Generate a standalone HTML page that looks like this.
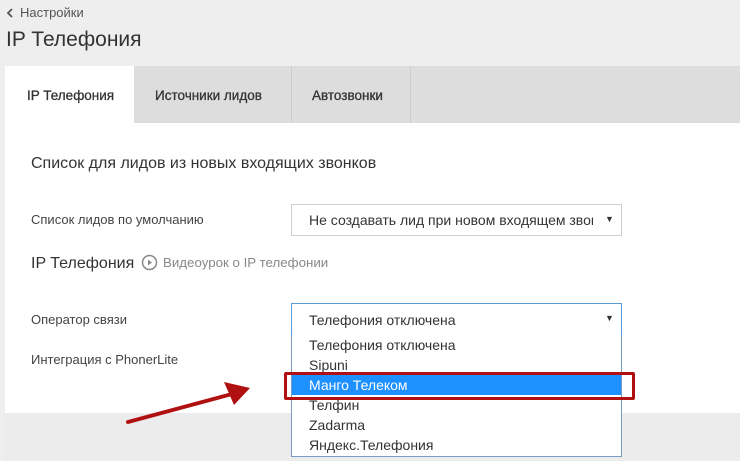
<!DOCTYPE html>
<html><head><meta charset="utf-8"><style>
*{margin:0;padding:0;box-sizing:border-box}
body{width:740px;height:461px;background:#eeeeee;font-family:"Liberation Sans","DejaVu Sans",sans-serif;color:#333;position:relative;overflow:hidden}
.a{position:absolute;white-space:nowrap}
</style></head><body>
<svg class="a" style="left:6px;top:8px" width="8" height="10"><path d="M6 1 L2 5 L6 9" fill="none" stroke="#555" stroke-width="1.8"/></svg>
<div class="a" style="left:20px;top:5px;font-size:13px;color:#555">Настройки</div>
<div class="a" style="left:6px;top:28px;font-size:21px;color:#333">IP Телефония</div>
<div class="a" style="left:5px;top:66px;width:735px;height:57px;background:#dddddd"></div>
<div class="a" style="left:5px;top:66px;width:129px;height:57px;background:#fff"></div>
<div class="a" style="left:291px;top:66px;width:1px;height:57px;background:#ccc"></div>
<div class="a" style="left:410px;top:66px;width:1px;height:57px;background:#ccc"></div>
<div class="a" style="left:27px;top:88px;font-size:13.5px;color:#333;-webkit-text-stroke:0.3px #333">IP Телефония</div>
<div class="a" style="left:155px;top:88px;font-size:13.5px;color:#333;-webkit-text-stroke:0.3px #333">Источники лидов</div>
<div class="a" style="left:312px;top:88px;font-size:13.5px;color:#333;-webkit-text-stroke:0.3px #333">Автозвонки</div>
<div class="a" style="left:5px;top:123px;width:735px;height:290px;background:#fff"></div>
<div class="a" style="left:31px;top:155px;font-size:16px;color:#333">Список для лидов из новых входящих звонков</div>
<div class="a" style="left:31px;top:212px;font-size:13px;color:#444">Список лидов по умолчанию</div>
<div class="a" style="left:291px;top:204px;width:331px;height:32px;border:1px solid #cfcfcf;background:#fff;overflow:hidden">
<div class="a" style="left:17px;top:7px;font-size:14px;width:284px;overflow:hidden">Не создавать лид при новом входящем звонке</div>
<div class="a" style="left:313px;top:9px;font-size:9px">&#9660;</div></div>
<div class="a" style="left:31px;top:255px;font-size:16px;color:#333">IP Телефония</div>
<svg class="a" style="left:141px;top:254px" width="17" height="17"><circle cx="8.5" cy="8.5" r="7" fill="none" stroke="#888" stroke-width="1.5"/><path d="M7 5.5 L11 8.5 L7 11.5Z" fill="#888"/></svg>
<div class="a" style="left:163px;top:255px;font-size:13.3px;color:#888">Видеоурок о IP телефонии</div>
<div class="a" style="left:31px;top:312px;font-size:13px;color:#444">Оператор связи</div>
<div class="a" style="left:31px;top:352px;font-size:13px;color:#444">Интеграция с PhonerLite</div>
<div class="a" style="left:5px;top:413px;width:735px;height:48px;background:#ececec"></div>
<div class="a" style="left:291px;top:303px;width:331px;height:33px;border:1px solid #5b9bd5;background:#fff">
<div class="a" style="left:17px;top:8px;font-size:14px">Телефония отключена</div>
<div class="a" style="left:313px;top:9px;font-size:9px">&#9660;</div></div>
<div class="a" style="left:291px;top:335px;width:331px;height:122px;border:1px solid #7a9cc0;border-top:none;background:#fff;font-size:14px;line-height:20px">
<div style="padding-left:17px">Телефония отключена</div>
<div style="padding-left:17px">Sipuni</div>
<div style="padding-left:17px;background:#1e90ff;color:#fff">Манго Телеком</div>
<div style="padding-left:17px">Телфин</div>
<div style="padding-left:17px">Zadarma</div>
<div style="padding-left:17px">Яндекс.Телефония</div>
</div>
<div class="a" style="left:284px;top:372px;width:351px;height:28px;border:3px solid #b01010;border-radius:2px"></div>
<svg class="a" style="left:120px;top:375px" width="140" height="55"><line x1="8" y1="47" x2="112" y2="19" stroke="#b01010" stroke-width="4" stroke-linecap="round"/><path d="M130 13 L104 7 L114 30Z" fill="#b01010"/></svg>
</body></html>
